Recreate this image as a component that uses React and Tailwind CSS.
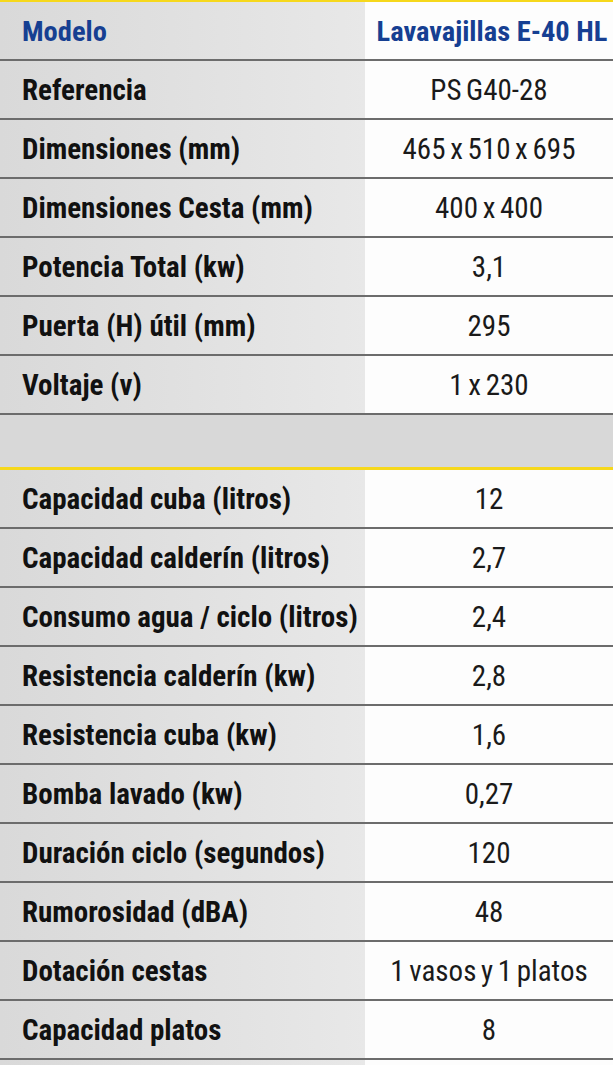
import React from "react";

const top = [
  ["Referencia", "PS G40-28"],
  ["Dimensiones (mm)", "465 x 510 x 695"],
  ["Dimensiones Cesta (mm)", "400 x 400"],
  ["Potencia Total (kw)", "3,1"],
  ["Puerta (H) útil (mm)", "295"],
  ["Voltaje (v)", "1 x 230"],
];

const bottom = [
  ["Capacidad cuba (litros)", "12"],
  ["Capacidad calderín (litros)", "2,7"],
  ["Consumo agua / ciclo (litros)", "2,4"],
  ["Resistencia calderín (kw)", "2,8"],
  ["Resistencia cuba (kw)", "1,6"],
  ["Bomba lavado (kw)", "0,27"],
  ["Duración ciclo (segundos)", "120"],
  ["Rumorosidad (dBA)", "48"],
  ["Dotación cestas", "1 vasos y 1 platos"],
  ["Capacidad platos", "8"],
];

function Row({ label, value }) {
  return (
    <div className="grid grid-cols-[365px_1fr] h-[59px] border-b-2 border-[#6c6c6c]">
      <div className="flex items-center pl-[22px] pt-[3px] bg-linear-to-r from-[#d9d9d9] to-[#e8e8e8] font-bold text-[29px] text-[#111] whitespace-nowrap">
        {label}
      </div>
      <div className="flex items-center justify-center pt-[3px] bg-[#fdfdfd] text-[29px] text-[#1a1a1a] whitespace-nowrap [word-spacing:-2px]">
        {value}
      </div>
    </div>
  );
}

export default function App() {
  return (
    <div className="w-[613px] h-[1065px] overflow-hidden bg-[#fdfdfd] font-['Roboto_Condensed','Liberation_Sans_Narrow',Roboto,sans-serif] font-stretch-condensed">
      <div className="grid grid-cols-[365px_1fr] h-[61px] border-t-2 border-[#f6d81c] border-b-2 border-b-[#6c6c6c]">
        <div className="flex items-center pl-[22px] pt-[3px] bg-linear-to-r from-[#d9d9d9] to-[#e8e8e8] font-bold text-[28.5px] text-[#163f92]">
          Modelo
        </div>
        <div className="flex items-center justify-center pt-[3px] pl-[6px] bg-[#fdfdfd] font-bold text-[28.5px] text-[#163f92] whitespace-nowrap">
          Lavavajillas E-40 HL
        </div>
      </div>
      {top.map(([l, v]) => (
        <Row key={l} label={l} value={v} />
      ))}
      <div className="h-[55px] bg-[#d8d8d8] border-b-[3px] border-[#f6d81c]" />
      {bottom.map(([l, v]) => (
        <Row key={l} label={l} value={v} />
      ))}
      <div className="grid grid-cols-[365px_1fr] h-[10px]">
        <div className="bg-linear-to-r from-[#d9d9d9] to-[#e8e8e8]" />
        <div className="bg-[#fdfdfd]" />
      </div>
    </div>
  );
}
